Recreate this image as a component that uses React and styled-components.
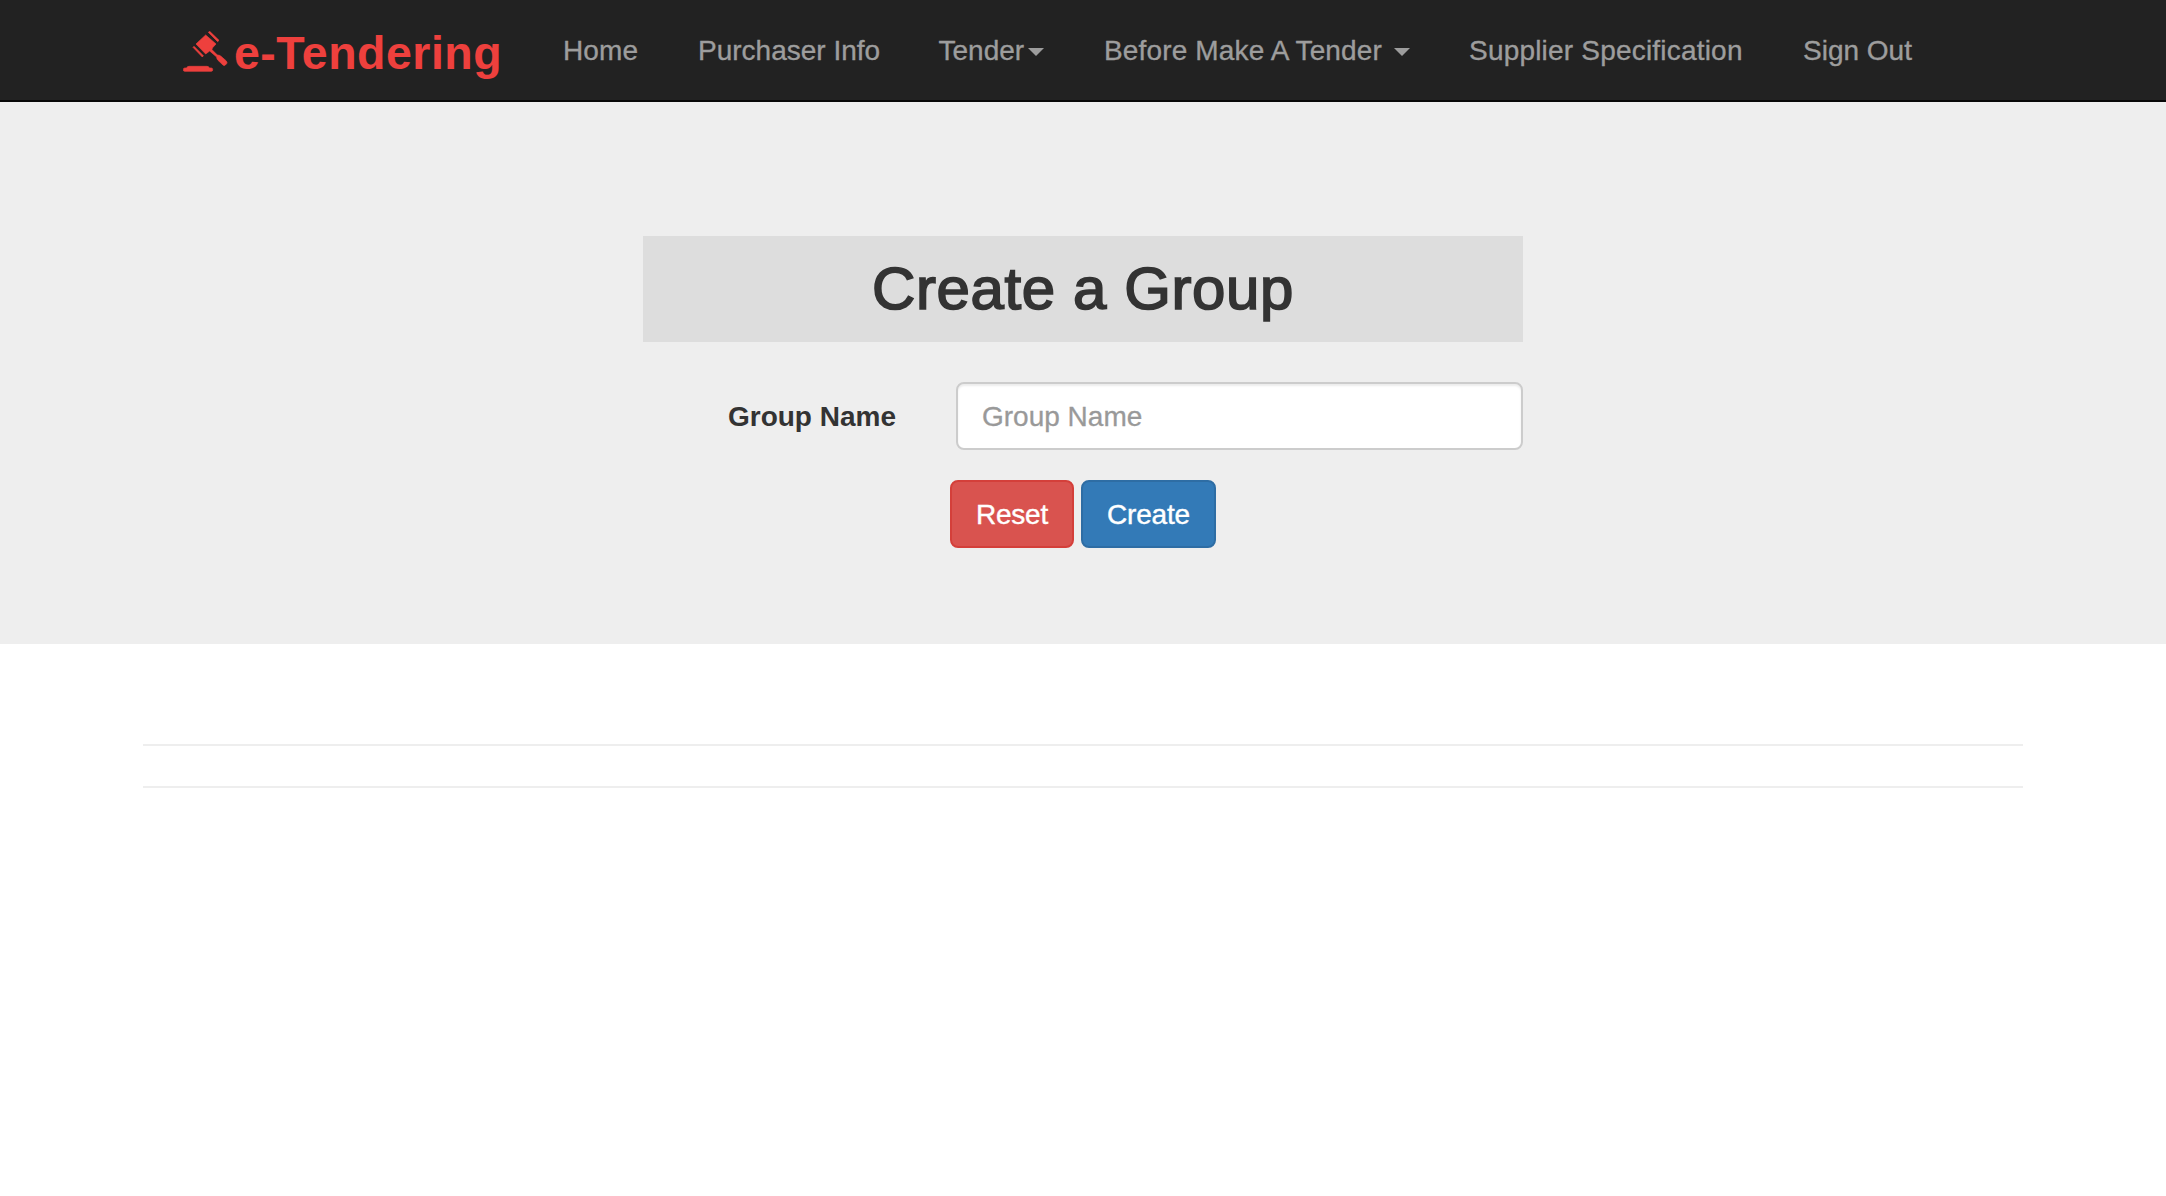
import React from "react";
import styled, { createGlobalStyle } from "styled-components";

const GlobalStyle = createGlobalStyle`
  *, *::before, *::after { box-sizing: border-box; }
  body {
    margin: 0;
    background: #fff;
    color: #333;
    font-family: "Liberation Sans", Arial, sans-serif;
    font-size: 28px;
    line-height: 40px;
  }
`;

const Navbar = styled.header`
  display: flex;
  height: 102px;
  padding-left: 183px;
  background: #222;
  border-bottom: 2px solid #080808;
`;

const Brand = styled.a`
  display: flex;
  width: 380px;
  flex: none;
  padding-top: 31px;
  color: #ee403d;
`;

const BrandName = styled.span`
  margin: 2px 0 0 6px;
  font-size: 46.5px;
  font-weight: 700;
  line-height: 40px;
  letter-spacing: 0.5px;
  white-space: nowrap;
`;

const Menu = styled.nav`
  display: flex;
  padding-top: 31px;
`;

const MenuLink = styled.a`
  display: flex;
  align-items: center;
  flex: none;
  width: ${(p) => p.$width}px;
  height: 40px;
  color: #9d9d9d;
  letter-spacing: ${(p) => p.$tracking || 0}px;
  white-space: nowrap;
  -webkit-text-stroke: 0.35px currentColor;
`;

const Caret = styled.i`
  margin: 2px 0 0 ${(p) => p.$gap}px;
  border-top: 8px solid currentColor;
  border-left: 8px solid transparent;
  border-right: 8px solid transparent;
`;

const Jumbotron = styled.section`
  display: flex;
  justify-content: center;
  height: 542px;
  padding-top: 134px;
  background: #eee;
`;

const Form = styled.form`
  width: 880px;
`;

const Title = styled.h2`
  margin: 0 0 40px;
  height: 106px;
  background: #ddd;
  font-size: 60px;
  font-weight: 400;
  line-height: 106px;
  letter-spacing: 0.6px;
  text-align: center;
  -webkit-text-stroke: 1.7px #333;
`;

const Field = styled.div`
  display: grid;
  grid-template-columns: 253px 567px;
  column-gap: 60px;
  align-items: center;
  margin-bottom: 30px;
`;

const Label = styled.label`
  padding-top: 2px;
  font-weight: 700;
  text-align: right;
`;

const Input = styled.input`
  width: 100%;
  height: 68px;
  padding: 2px 24px 0;
  border: 2px solid #ccc;
  border-radius: 8px;
  background: #fff;
  box-shadow: inset 0 2px 2px rgba(0, 0, 0, 0.075);
  color: #555;
  font: inherit;
  outline: none;
  &::placeholder { color: #999; opacity: 1; -webkit-text-stroke: 0.3px #999; }
`;

const Actions = styled.div`
  display: flex;
  gap: 7px;
  padding-left: 307px;
`;

const Button = styled.button`
  width: ${(p) => p.$width}px;
  height: 68px;
  padding: 2px 0 0;
  border: 2px solid ${(p) => (p.$danger ? "#d43f3a" : "#2e6da4")};
  border-radius: 8px;
  background: ${(p) => (p.$danger ? "#d9534f" : "#337ab7")};
  color: #fff;
  font: inherit;
  letter-spacing: -0.2px;
  -webkit-text-stroke: 0.4px #fff;
`;

const Footer = styled.footer`
  padding: 100px 143px 0;
`;

const Rule = styled.hr`
  margin: 0 0 40px;
  border: 0;
  border-top: 2px solid #eee;
`;

const Gavel = () => (
  <svg width="45" height="41" viewBox="9 14 135 123" fill="currentColor" stroke="currentColor" strokeWidth="2" strokeLinejoin="round" aria-hidden="true">
    <path d="M48 53 77 26 108 53 97 65 96 70 112 86Q119 86 123 90L138 103Q143 108 140 112L136 116Q133 119 129 116L114 102Q110 98 110 92L89 74 77 83Z" />
    <path d="M85 18 89 15 117 42 113 46ZM39 63 42 60 70 88 67 92Z" />
    <path d="M20 125Q21 120 27 120H81Q87 120 88 125H94Q98 125 98 130 98 135 94 135H14Q10 135 10 130 10 125 14 125Z" />
  </svg>
);

const links = [
  { label: "Home", width: 135, tracking: 0.1 },
  { label: "Purchaser Info", width: 240.5 },
  { label: "Tender", width: 165.5, caret: 4 },
  { label: "Before Make A Tender", width: 365, caret: 12, tracking: 0.15 },
  { label: "Supplier Specification", width: 334, tracking: 0.2 },
  { label: "Sign Out", width: 112 },
];

export default function App() {
  return (
    <>
      <GlobalStyle />
      <Navbar>
        <Brand>
          <Gavel />
          <BrandName>e-Tendering</BrandName>
        </Brand>
        <Menu>
          {links.map((l) => (
            <MenuLink key={l.label} $width={l.width} $tracking={l.tracking}>
              {l.label}
              {l.caret && <Caret $gap={l.caret} />}
            </MenuLink>
          ))}
        </Menu>
      </Navbar>
      <Jumbotron>
        <Form>
          <Title>Create a Group</Title>
          <Field>
            <Label htmlFor="group-name">Group Name</Label>
            <Input id="group-name" placeholder="Group Name" />
          </Field>
          <Actions>
            <Button type="reset" $danger $width={124}>Reset</Button>
            <Button type="button" $width={135}>Create</Button>
          </Actions>
        </Form>
      </Jumbotron>
      <Footer>
        <Rule />
        <Rule />
      </Footer>
    </>
  );
}
